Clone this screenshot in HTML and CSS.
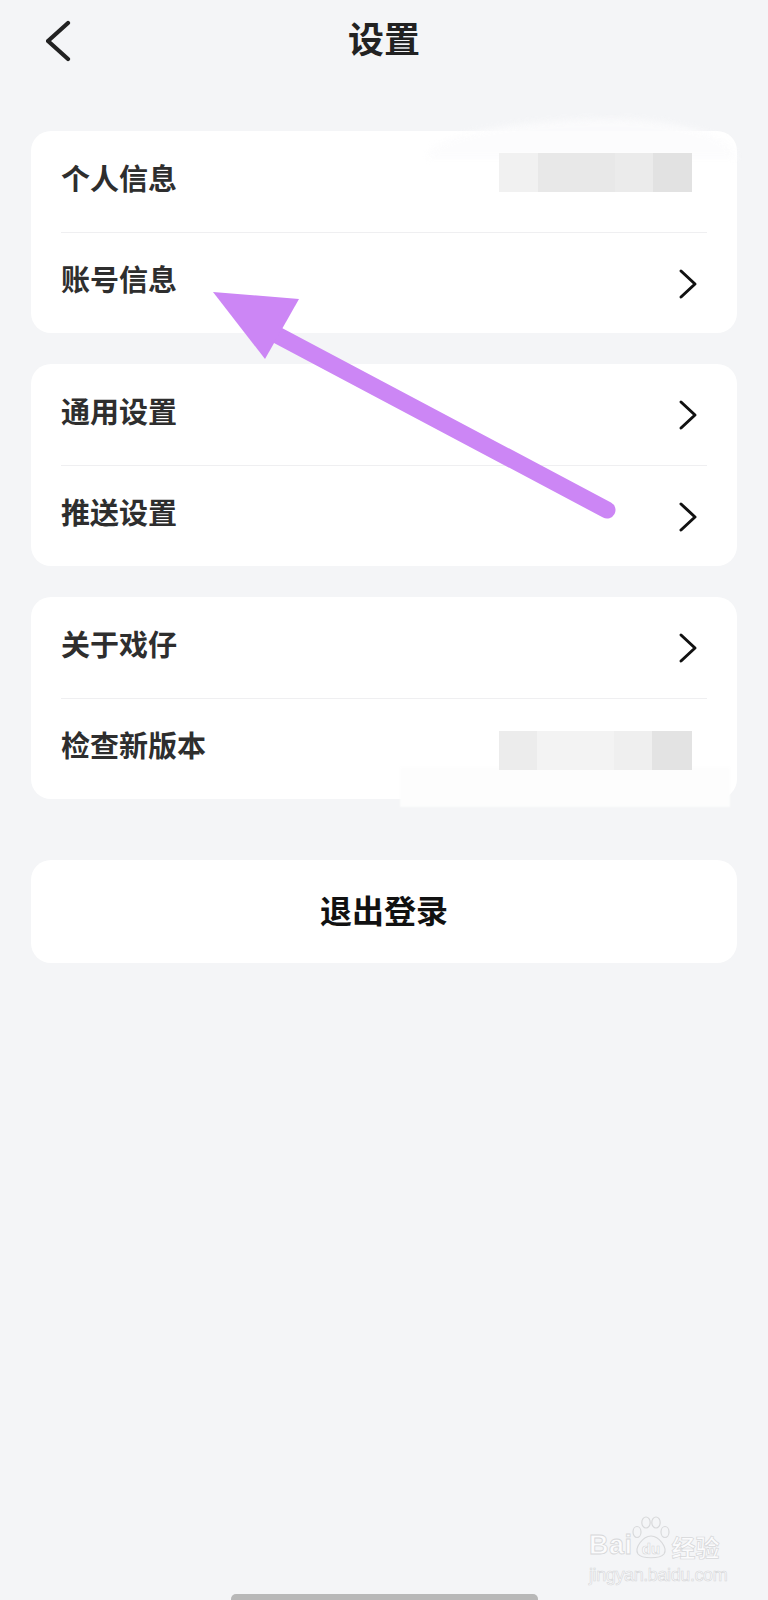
FILE: index.html
```html
<!DOCTYPE html>
<html lang="zh-CN">
<head>
<meta charset="utf-8">
<title>设置</title>
<link rel="stylesheet" href="styles.css">
</head>
<body>
<div class="page">
  <header class="topbar">
    <div class="back">
      <svg width="30" height="44" viewBox="0 0 30 44"><path d="M22 3 L2 21 L22 39" fill="none" stroke="#222" stroke-width="4.2" stroke-linecap="round" stroke-linejoin="round" transform="translate(0,1)"/></svg>
    </div>
    <h1 class="title">设置</h1>
    <div class="spacer"></div>
  </header>

  <main class="content">
    <section class="card card-first">
      <div class="haze haze-top"></div>
      <div class="row">
        <span class="label">个人信息</span>
        <div class="pixels pixels-top">
          <i class="px p1"></i><i class="px p2"></i><i class="px p3"></i><i class="px p4"></i>
        </div>
      </div>
      <div class="row">
        <span class="label">账号信息</span>
        <svg class="chev" width="20" height="32" viewBox="0 0 20 32"><path d="M3 3 L17 16 L3 29" fill="none" stroke="#111" stroke-width="3" stroke-linecap="round" stroke-linejoin="round"/></svg>
      </div>
    </section>

    <section class="card">
      <div class="row">
        <span class="label">通用设置</span>
        <svg class="chev" width="20" height="32" viewBox="0 0 20 32"><path d="M3 3 L17 16 L3 29" fill="none" stroke="#111" stroke-width="3" stroke-linecap="round" stroke-linejoin="round"/></svg>
      </div>
      <div class="row">
        <span class="label">推送设置</span>
        <svg class="chev" width="20" height="32" viewBox="0 0 20 32"><path d="M3 3 L17 16 L3 29" fill="none" stroke="#111" stroke-width="3" stroke-linecap="round" stroke-linejoin="round"/></svg>
      </div>
    </section>

    <section class="card card-third">
      <div class="row">
        <span class="label">关于戏仔</span>
        <svg class="chev" width="20" height="32" viewBox="0 0 20 32"><path d="M3 3 L17 16 L3 29" fill="none" stroke="#111" stroke-width="3" stroke-linecap="round" stroke-linejoin="round"/></svg>
      </div>
      <div class="row">
        <span class="label">检查新版本</span>
        <div class="pixels pixels-bottom">
          <i class="px q1"></i><i class="px q2"></i><i class="px q3"></i><i class="px q4"></i>
        </div>
      </div>
      <div class="haze haze-bottom"></div>
    </section>

    <button class="logout"><span class="logout-text">退出登录</span></button>
  </main>

  <svg class="arrow" width="768" height="600" viewBox="0 0 768 600">
    <line x1="262" y1="327" x2="607" y2="510" stroke="#cc86f5" stroke-width="17" stroke-linecap="round"/>
    <polygon points="213,292 299,299 265,359" fill="#cc86f5"/>
  </svg>

  <div class="watermark">
    <div class="wm-top">
      <span class="wm-bai">Bai</span>
      <svg class="wm-paw" width="44" height="44" viewBox="0 0 44 44">
        <g fill="none" stroke="#d8d9db" stroke-width="1.2">
          <ellipse cx="8" cy="16" rx="4" ry="5.5"/>
          <ellipse cx="17" cy="6.5" rx="4.2" ry="5.5"/>
          <ellipse cx="27" cy="6.5" rx="4.2" ry="5.5"/>
          <ellipse cx="36" cy="16" rx="4" ry="5.5"/>
          <path d="M22 20 C14 20 5 32 9 38 C13 43 31 43 35 38 C39 32 30 20 22 20 Z"/>
        </g>
        <text x="22" y="38" text-anchor="middle" class="wm-du">du</text>
      </svg>
      <span class="wm-cn">经验</span>
    </div>
    <div class="wm-url">jingyan.baidu.com</div>
  </div>

  <div class="home-indicator"></div>
</div>
</body>
</html>
```

FILE: styles.css
```css
* { box-sizing: border-box; }

html, body {
  margin: 0;
  padding: 0;
  background: #f4f5f7;
}

body {
  font-family: "Noto Sans CJK SC", "Noto Sans", sans-serif;
  color: #2b2b2b;
}

.page {
  position: relative;
  width: 768px;
  min-height: 1600px;
  overflow: hidden;
}

.topbar {
  height: 82px;
  display: grid;
  grid-template-columns: 1fr auto 1fr;
  align-items: center;
}

.back {
  padding-left: 46px;
  display: flex;
  align-items: center;
}

.title {
  margin: 0;
  font-size: 36px;
  font-weight: 700;
  color: #222;
  line-height: 1;
  padding-bottom: 9px;
}

.content {
  padding: 49px 31px 0;
  display: flex;
  flex-direction: column;
}

.card {
  position: relative;
  background: #fff;
  border-radius: 20px;
}

.card + .card {
  margin-top: 31px;
}

.row {
  position: relative;
  height: 101px;
  margin: 0 30px;
  display: flex;
  align-items: center;
  justify-content: space-between;
}

.row + .row {
  border-top: 1px solid #efeff1;
}

.label {
  font-size: 29px;
  font-weight: 600;
  color: #2e2e2e;
  line-height: 1;
  margin-bottom: 9px;
}

.chev {
  margin-right: 9px;
  margin-top: 1px;
}

.pixels {
  display: flex;
  height: 39px;
  margin-right: 15px;
  position: relative;
  z-index: 1;
}

.pixels-top {
  align-self: flex-start;
  margin-top: 22px;
}

.pixels-bottom {
  margin-top: 3px;
}

.px { display: block; height: 39px; }
.p1 { width: 39px; background: #f1f1f1; }
.p2 { width: 77px; background: #e8e8e8; }
.p3 { width: 38px; background: #ebebeb; }
.p4 { width: 39px; background: #e2e2e2; }

.q1 { width: 38px; background: #ececec; }
.q2 { width: 77px; background: #f3f3f3; }
.q3 { width: 38px; background: #efefef; }
.q4 { width: 40px; background: #e3e3e3; }

.haze {
  position: absolute;
  background: #fcfcfd;
  pointer-events: none;
}

.haze-top {
  left: 395px;
  top: -12px;
  width: 310px;
  height: 40px;
  border-radius: 60% 40% 0 0 / 100% 100% 0 0;
  filter: blur(3px);
  opacity: 0.85;
}

.haze-bottom {
  left: 369px;
  top: 170px;
  width: 330px;
  height: 40px;
  background: #fdfdfd;
  filter: blur(1px);
}

.logout {
  margin-top: 61px;
  height: 103px;
  border: 0;
  border-radius: 20px;
  background: #fff;
  font-family: "Noto Sans CJK SC", "Noto Sans", sans-serif;
  font-size: 32px;
  font-weight: 700;
  color: #111;
  padding: 0;
  display: flex;
  align-items: center;
  justify-content: center;
}

.logout-text {
  line-height: 1;
  margin-bottom: 6px;
}

.arrow {
  position: absolute;
  left: 0;
  top: 0;
  pointer-events: none;
}

.watermark {
  position: absolute;
  left: 589px;
  top: 1514px;
  width: 142px;
  color: #fff;
}

.wm-top {
  display: flex;
  align-items: flex-end;
  height: 46px;
}

.wm-bai {
  font-family: "Liberation Sans", Arial, sans-serif;
  font-size: 27px;
  font-weight: 700;
  line-height: 1;
  color: #fbfbfc;
  -webkit-text-stroke: 0.8px #d6d7d9;
  margin-bottom: 1px;
  letter-spacing: 0.5px;
}

.wm-paw { margin-left: -4px; }

.wm-du {
  font-family: "Liberation Sans", Arial, sans-serif;
  font-size: 15px;
  font-weight: 700;
  fill: #fbfbfc;
  stroke: #d6d7d9;
  stroke-width: 0.6px;
}

.wm-cn {
  font-size: 24px;
  font-weight: 700;
  line-height: 1;
  color: #fbfbfc;
  -webkit-text-stroke: 0.7px #d6d7d9;
  margin-bottom: 1px;
  margin-left: -1px;
}

.wm-url {
  margin-top: 6px;
  font-family: "Liberation Sans Narrow", "Liberation Sans", Arial, sans-serif;
  font-size: 18px;
  line-height: 1;
  color: #fbfbfc;
  -webkit-text-stroke: 0.6px #d6d7d9;
  letter-spacing: -0.4px;
}

.home-indicator {
  position: absolute;
  left: 231px;
  top: 1594px;
  width: 307px;
  height: 10px;
  border-radius: 5px;
  background: #b8b8b8;
}
```
